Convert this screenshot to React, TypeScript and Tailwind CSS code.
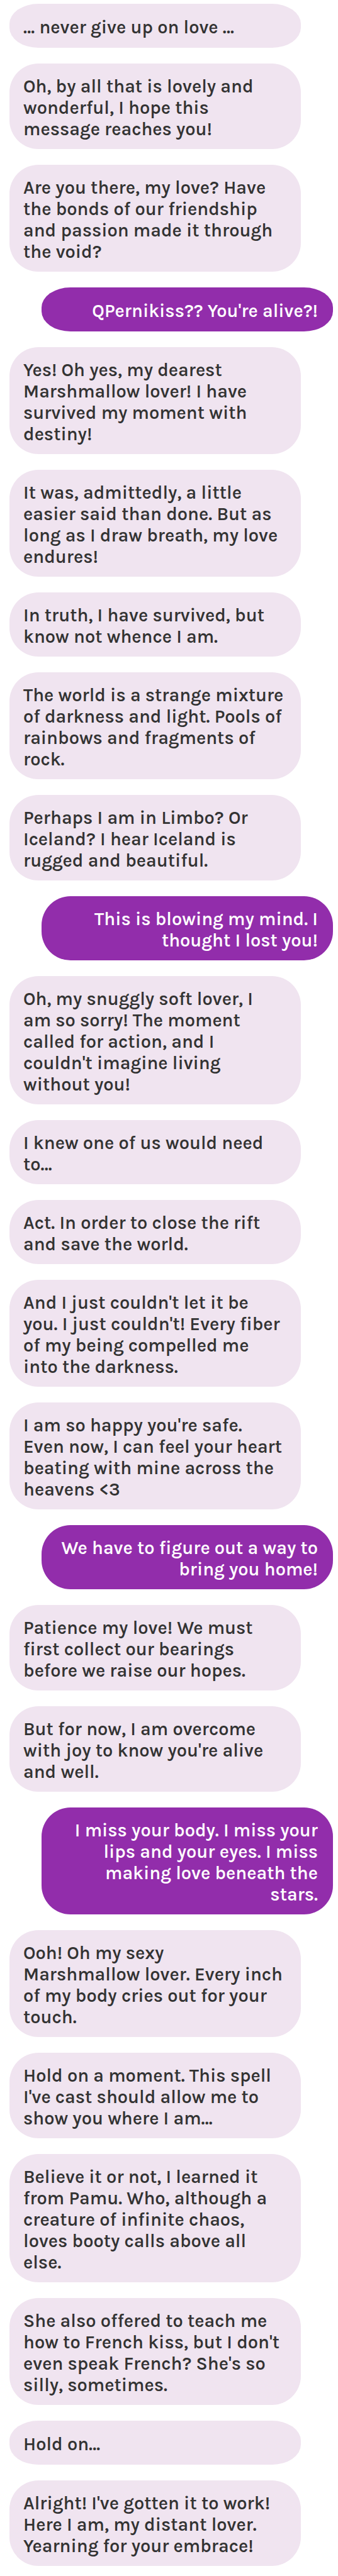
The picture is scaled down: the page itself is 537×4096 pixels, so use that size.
type Message = { from: 'them' | 'me'; text: string; short?: boolean };

const messages: Message[] = [
  { from: 'them', text: '… never give up on love …', short: true },
  { from: 'them', text: 'Oh, by all that is lovely and wonderful, I hope this message reaches you!' },
  { from: 'them', text: 'Are you there, my love? Have the bonds of our friendship and passion made it through the void?' },
  { from: 'me', text: "QPernikiss?? You're alive?!", short: true },
  { from: 'them', text: 'Yes! Oh yes, my dearest Marshmallow lover! I have survived my moment with destiny!' },
  { from: 'them', text: 'It was, admittedly, a little easier said than done. But as long as I draw breath, my love endures!' },
  { from: 'them', text: 'In truth, I have survived, but know not whence I am.' },
  { from: 'them', text: 'The world is a strange mixture of darkness and light. Pools of rainbows and fragments of rock.' },
  { from: 'them', text: 'Perhaps I am in Limbo? Or Iceland? I hear Iceland is rugged and beautiful.' },
  { from: 'me', text: 'This is blowing my mind. I thought I lost you!' },
  { from: 'them', text: "Oh, my snuggly soft lover, I am so sorry! The moment called for action, and I couldn't imagine living without you!" },
  { from: 'them', text: 'I knew one of us would need to…' },
  { from: 'them', text: 'Act. In order to close the rift and save the world.' },
  { from: 'them', text: "And I just couldn't let it be you. I just couldn't! Every fiber of my being compelled me into the darkness." },
  { from: 'them', text: "I am so happy you're safe. Even now, I can feel your heart beating with mine across the heavens <3" },
  { from: 'me', text: 'We have to figure out a way to bring you home!' },
  { from: 'them', text: 'Patience my love! We must first collect our bearings before we raise our hopes.' },
  { from: 'them', text: "But for now, I am overcome with joy to know you're alive and well." },
  { from: 'me', text: 'I miss your body. I miss your lips and your eyes. I miss making love beneath the stars.' },
  { from: 'them', text: 'Ooh! Oh my sexy Marshmallow lover. Every inch of my body cries out for your touch.' },
  { from: 'them', text: "Hold on a moment. This spell I've cast should allow me to show you where I am…" },
  { from: 'them', text: 'Believe it or not, I learned it from Pamu. Who, although a creature of infinite chaos, loves booty calls above all else.' },
  { from: 'them', text: "She also offered to teach me how to French kiss, but I don't even speak French? She's so silly, sometimes." },
  { from: 'them', text: 'Hold on…', short: true },
  { from: 'them', text: "Alright! I've gotten it to work! Here I am, my distant lover. Yearning for your embrace!" },
];

function Bubble({ from, text, short }: Message) {
  const side =
    from === 'me'
      ? 'self-end bg-[#922dab] pr-6 pl-6 text-right text-white'
      : 'self-start bg-[#f0e4f0] pr-[26px] pl-[22px] text-[#333333]';
  const shape = short ? 'rounded-[46px/32px] pt-5 pb-4' : 'rounded-[46px] pt-[19px] pb-[15px]';
  return (
    <li className={`w-[90%] ${side} ${shape}`}>
      <p>{text}</p>
    </li>
  );
}

export default function App() {
  return (
    <main className="min-h-screen bg-white pt-[6px] pr-2 pb-3 pl-[15px] font-['Karla','Inter',sans-serif] text-[29px] leading-[34px] font-semibold">
      <ul className="flex flex-col gap-[25px]">
        {messages.map((message) => (
          <Bubble key={message.text} {...message} />
        ))}
      </ul>
    </main>
  );
}
